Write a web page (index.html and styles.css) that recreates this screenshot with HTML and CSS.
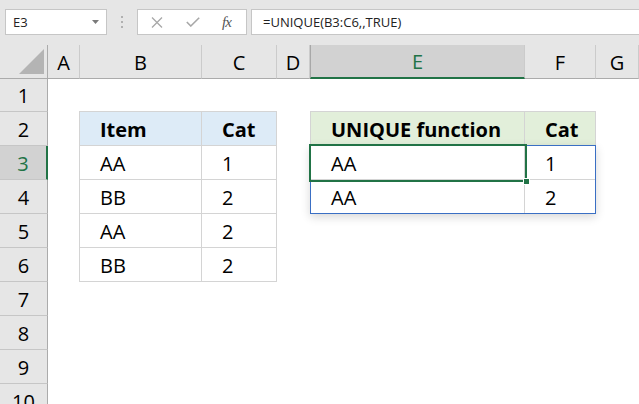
FILE: index.html
```html
<!DOCTYPE html>
<html>
<head>
<meta charset="utf-8">
<link rel="stylesheet" href="styles.css">
</head>
<body>
<div class="fbar">
  <div class="namebox"><span>E3</span><svg class="ddarrow" width="7" height="4" viewBox="0 0 7 4"><polygon points="0,0 7,0 3.5,4" fill="#7a7a7a"/></svg></div>
  <div class="grip"><i></i><i></i><i></i></div>
  <div class="btns">
    <svg width="12" height="11" viewBox="0 0 12 11"><path d="M1 0.5 L11 10.5 M11 0.5 L1 10.5" stroke="#a8a8a8" stroke-width="1.3" fill="none"/></svg>
    <svg width="14" height="10" viewBox="0 0 14 10"><path d="M0.8 5 L4.8 9 L13.2 0.8" stroke="#a8a8a8" stroke-width="1.6" fill="none"/></svg>
    <span class="fx">fx</span>
  </div>
  <div class="formula">=UNIQUE(B3:C6,,TRUE)</div>
</div>
<div class="sheet">
  <div class="corner"><svg width="47" height="33" viewBox="0 0 47 33"><polygon points="19,29 44,29 44,4" fill="#b4b4b4"/></svg></div>
  <div class="ch">A</div>
  <div class="ch">B</div>
  <div class="ch">C</div>
  <div class="ch">D</div>
  <div class="ch active">E</div>
  <div class="ch">F</div>
  <div class="ch">G</div>
  <div class="rh">1</div>
  <div class="rh">2</div>
  <div class="rh active">3</div>
  <div class="rh">4</div>
  <div class="rh">5</div>
  <div class="rh">6</div>
  <div class="rh">7</div>
  <div class="rh">8</div>
  <div class="rh">9</div>
  <div class="rh">10</div>

  <div class="tbl t1">
    <div class="cell hd blue">Item</div><div class="cell hd blue">Cat</div>
    <div class="cell">AA</div><div class="cell">1</div>
    <div class="cell">BB</div><div class="cell">2</div>
    <div class="cell">AA</div><div class="cell">2</div>
    <div class="cell">BB</div><div class="cell">2</div>
  </div>

  <div class="tbl t2">
    <div class="cell hd green">UNIQUE function</div><div class="cell hd green">Cat</div>
    <div class="cell">AA</div><div class="cell">1</div>
    <div class="cell">AA</div><div class="cell">2</div>
  </div>

  <div class="spill"></div>
  <div class="selection"><span class="handle"></span></div>
</div>
</body>
</html>
```

FILE: styles.css
```css
* { box-sizing: border-box; margin: 0; padding: 0; }
html, body { width: 639px; height: 404px; overflow: hidden; }
body { background: #fff; font-family: "Open Sans", "Noto Sans", sans-serif; color: #000; }

.fbar {
  height: 45px;
  background: #e6e6e6;
  display: flex;
  align-items: flex-start;
  padding: 9px 0 0 5px;
}
.namebox {
  width: 102px; height: 26px;
  background: #fff;
  border: 1px solid #c6c6c6;
  display: flex; align-items: center; justify-content: space-between;
  padding: 0 7px 0 7px;
  font-size: 13px; color: #222;
}
.grip {
  width: 30px; height: 26px;
  display: flex; flex-direction: column; align-items: center; justify-content: center; gap: 3px;
}
.grip i { display: block; width: 2px; height: 2px; background: #b0b0b0; }
.btns {
  width: 110px; height: 26px;
  background: #fff;
  border: 1px solid #c6c6c6;
  display: flex; align-items: center;
  padding-left: 13px; gap: 23px;
}
.fx { font-family: "Liberation Serif", serif; font-style: italic; font-size: 15px; color: #555; margin-left: -1px; letter-spacing: -1px; }
.formula {
  flex: 1; height: 26px; margin-left: 4px;
  background: #fff;
  border: 1px solid #c6c6c6; border-right: none;
  padding-left: 11px;
  font-size: 13px; line-height: 24px; color: #222;
}

.sheet {
  display: grid;
  grid-template-columns: 48px 32px 122px 75px 33px 215px 71px 1fr;
  grid-template-rows: 34px 33px repeat(9, 34px);
}
.corner, .ch {
  background: #e6e6e6;
  border-bottom: 1px solid #ababab;
}
.corner { border-right: 1px solid #ababab; }
.corner svg { display: block; }
.ch {
  border-right: 1px solid #cbcbcb;
  display: flex; align-items: center; justify-content: center;
  font-size: 20px; padding-top: 1px;
}
.ch.active {
  background: #d2d2d2; color: #217346;
  border-bottom: 2px solid #217346;
  border-left: 1px solid #a8a8a8;
}
.rh {
  grid-column: 1;
  background: #e6e6e6;
  border-right: 1px solid #ababab;
  border-bottom: 1px solid #c6c6c6;
  display: flex; align-items: center; justify-content: center;
  font-size: 20px; padding-top: 1px;
}
.rh.active {
  background: #d2d2d2; color: #217346;
  border-right: 2px solid #217346;
}

.tbl {
  display: grid;
  margin-top: -1px;
  border-top: 1px solid #d4d4d4;
  border-left: 1px solid #d4d4d4;
  grid-auto-rows: 34px;
}
.t1 { grid-column: 3 / 5; grid-row: 3 / 8; margin-left: -1px; grid-template-columns: 122px 75px; }
.t2 { grid-column: 6 / 8; grid-row: 3 / 6; grid-template-columns: 214px 71px; }
.cell {
  border-right: 1px solid #d4d4d4;
  border-bottom: 1px solid #d4d4d4;
  display: flex; align-items: center;
  padding: 2px 0 0 20px;
  font-size: 20px;
}
.hd { font-weight: 700; }
.blue { background: #ddebf7; }
.green { background: #e2efda; }

.spill {
  grid-column: 6 / 8; grid-row: 4 / 6;
  margin-top: -1px;
  border: 1px solid #3a6fc4;
  box-shadow: 0 3px 9px rgba(0,0,0,0.16);
  pointer-events: none;
  z-index: 1;
}
.selection {
  grid-column: 6 / 7; grid-row: 4 / 5;
  margin: -2px -2px -2px -1px;
  border: 2px solid #217346;
  position: relative;
  pointer-events: none;
  z-index: 2;
}
.handle {
  position: absolute; right: -5px; bottom: -5px;
  width: 7px; height: 7px;
  background: #217346;
  border: 1px solid #fff;
}
```
